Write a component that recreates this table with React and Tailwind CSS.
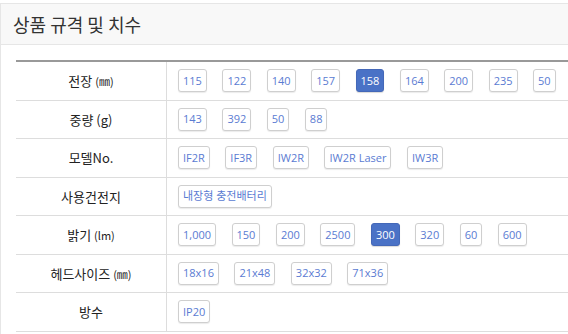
import React from 'react'

const rows = [
  { label: <>전장 <span className="text-[11px]">(㎜)</span></>, items: ['115', '122', '140', '157', '158', '164', '200', '235', '50'], active: '158' },
  { label: <>중량 (g)</>, items: ['143', '392', '50', '88'] },
  { label: <>모델No.</>, items: ['IF2R', 'IF3R', 'IW2R', 'IW2R Laser', 'IW3R'] },
  { label: <>사용건전지</>, items: ['내장형 충전배터리'] },
  { label: <>밝기 <span className="text-[11px]">(lm)</span></>, items: ['1,000', '150', '200', '2500', '300', '320', '60', '600'], active: '300' },
  { label: <>헤드사이즈 <span className="text-[11px]">(㎜)</span></>, items: ['18x16', '21x48', '32x32', '71x36'] },
  { label: <>방수</>, items: ['IP20'] },
]

function OptionButton({ text, active }) {
  return (
    <span
      className={
        active
          ? 'inline-flex h-[23px] items-center rounded-[3px] border border-[#4468b8] bg-[#4a72c6] px-[4px] text-[11px] text-white shadow-[0_1px_1px_rgba(0,0,0,0.15)]'
          : 'inline-flex h-[23px] items-center rounded-[3px] border border-[#cfcfcf] bg-white px-[4px] text-[11px] text-[#5a7bd2] shadow-[0_1px_1px_rgba(0,0,0,0.08)]'
      }
    >
      {text}
    </span>
  )
}

export default function App() {
  return (
    <div className="h-[334px] w-[568px] overflow-hidden bg-white" style={{ fontFamily: '"Open Sans", "Noto Sans CJK KR", sans-serif' }}>
      <div className="mt-[3px] w-[640px] border-l border-t border-[#e6e6e6] pb-10">
        {/* panel heading */}
        <div className="flex h-[41px] items-center border-b border-[#e6e6e6] bg-[#f8f8f8] pl-[12px]">
          <h2 className="text-[18px] font-normal text-[#333]" style={{ fontFamily: '"Noto Sans CJK KR", sans-serif' }}>
            상품 규격 및 치수
          </h2>
        </div>

        {/* spec table */}
        <div className="ml-[15px] mt-[15px] border-t-2 border-[#999]">
          {rows.map((row, i) => (
            <div key={i} className="flex h-[38.5px] border-b border-[#dddddd]">
              <div
                className="flex w-[151px] shrink-0 items-center justify-center border-r border-[#dddddd] text-[13px] text-[#222]"
                style={{ fontFamily: '"Noto Sans CJK KR", sans-serif' }}
              >
                <span>{row.label}</span>
              </div>
              <div className="flex items-center gap-x-[15.5px] pl-[11px]">
                {row.items.map((it) => (
                  <OptionButton key={it} text={it} active={it === row.active} />
                ))}
              </div>
            </div>
          ))}
        </div>
      </div>
    </div>
  )
}
